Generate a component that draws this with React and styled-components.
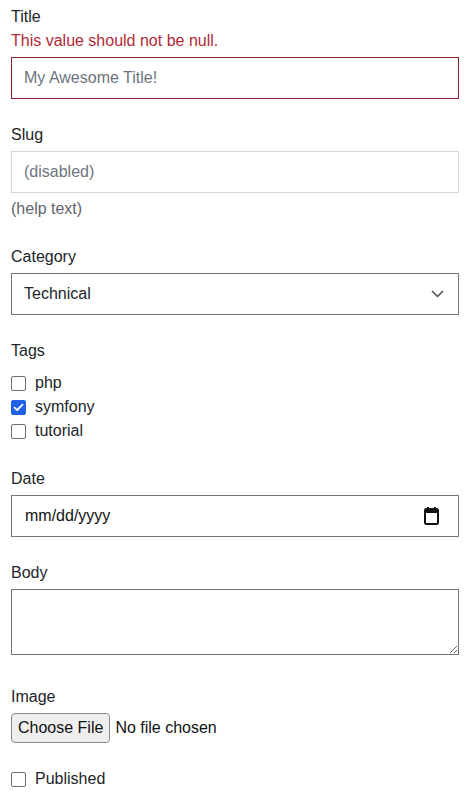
import React from "react";
import styled, { createGlobalStyle } from "styled-components";

const Global = createGlobalStyle`
  html, body { margin: 0; padding: 0; background: #fff; }
  body {
    font-family: "Liberation Sans", Arial, sans-serif;
    font-size: 16px;
    line-height: 24px;
    color: #212529;
  }
  * { box-sizing: border-box; }
`;

const Form = styled.form`
  width: 472px;
  padding: 5px 13px 0 11px;
  display: flex;
  flex-direction: column;
`;

const Group = styled.div`
  margin-bottom: ${(p) => p.$mb ?? 24}px;
  display: flex;
  flex-direction: column;
  align-items: stretch;
`;

const Label = styled.label`
  display: block;
  font-size: 16px;
  line-height: 24px;
  color: #212529;
  margin-bottom: 4px;
`;

const Error = styled.span`
  display: block;
  color: #b02a37;
`;

const TextInput = styled.input`
  display: block;
  width: 100%;
  height: 42px;
  padding: 0 12px;
  font: inherit;
  color: #212529;
  background: #fff;
  border: 1px solid ${(p) => (p.$invalid ? "#8f2231" : p.disabled ? "#d6d6d6" : "#767676")};
  border-radius: 0;
  outline: none;
  &::placeholder { color: #6c737d; opacity: 1; }
`;

const Help = styled.div`
  margin-top: 4px;
  color: #5f656c;
`;

const SelectWrap = styled.div`
  position: relative;
`;

const Select = styled.select`
  appearance: none;
  -webkit-appearance: none;
  display: block;
  width: 100%;
  height: 42px;
  padding: 0 40px 0 12px;
  font: inherit;
  color: #212529;
  background: #fff;
  border: 1px solid #767676;
  border-radius: 0;
  outline: none;
`;

const Chevron = styled.svg`
  position: absolute;
  right: 15px;
  top: 17px;
  pointer-events: none;
`;

const CheckList = styled.div`
  padding-top: ${(p) => p.$pt ?? 4}px;
  display: flex;
  flex-direction: column;
`;

const CheckRow = styled.label`
  display: flex;
  align-items: center;
  height: 24px;
  gap: 9px;
  color: #212529;
`;

const Box = styled.span`
  width: 15px;
  height: 15px;
  flex: none;
  border-radius: 2px;
  border: 1px solid ${(p) => (p.$checked ? "#1f62e8" : "#6f6f6f")};
  background: ${(p) => (p.$checked ? "#1f62e8" : "#fff")};
  display: flex;
  align-items: center;
  justify-content: center;
`;

const DateField = styled.div`
  height: 42px;
  border: 1px solid #767676;
  display: flex;
  align-items: center;
  justify-content: space-between;
  padding: 0 19px 0 13px;
  color: #111;
`;

const TextArea = styled.textarea`
  display: block;
  width: 100%;
  height: 66px;
  padding: 8px 12px;
  font: inherit;
  border: 1px solid #767676;
  border-radius: 0;
  margin-bottom: 6px;
  resize: vertical;
  outline: none;
`;

const FileRow = styled.div`
  display: flex;
  align-items: center;
  gap: 5px;
  height: 30px;
`;

const FileButton = styled.span`
  height: 30px;
  display: flex;
  align-items: center;
  padding: 0 6px;
  background: #efefef;
  border: 1px solid #8a8a8a;
  border-radius: 4px;
  color: #111;
`;

const FileText = styled.span`
  color: #111;
`;

function Check({ label, checked }) {
  return (
    <CheckRow>
      <Box $checked={checked}>
        {checked && (
          <svg width="11" height="9" viewBox="0 0 11 9">
            <path d="M1.5 4.6 L4.2 7.2 L9.5 1.6" fill="none" stroke="#fff" strokeWidth="1.8" strokeLinecap="round" strokeLinejoin="round" />
          </svg>
        )}
      </Box>
      {label}
    </CheckRow>
  );
}

export default function App() {
  return (
    <>
      <Global />
      <Form onSubmit={(e) => e.preventDefault()}>
        <Group>
          <Label>
            Title
            <Error>This value should not be null.</Error>
          </Label>
          <TextInput $invalid placeholder="My Awesome Title!" />
        </Group>

        <Group>
          <Label>Slug</Label>
          <TextInput disabled placeholder="(disabled)" />
          <Help>(help text)</Help>
        </Group>

        <Group>
          <Label>Category</Label>
          <SelectWrap>
            <Select defaultValue="technical">
              <option value="technical">Technical</option>
            </Select>
            <Chevron width="13" height="8" viewBox="0 0 13 8">
              <path d="M1 1 L6.5 6.5 L12 1" fill="none" stroke="#4a4a4a" strokeWidth="1.5" />
            </Chevron>
          </SelectWrap>
        </Group>

        <Group>
          <Label>Tags</Label>
          <CheckList>
            <Check label="php" />
            <Check label="symfony" checked />
            <Check label="tutorial" />
          </CheckList>
        </Group>

        <Group>
          <Label>Date</Label>
          <DateField>
            <span>mm/dd/yyyy</span>
            <svg width="15" height="18" viewBox="0 0 15 18">
              <rect x="3" y="0" width="2" height="3" fill="#111" />
              <rect x="10" y="0" width="2" height="3" fill="#111" />
              <rect x="1" y="2" width="13" height="15" rx="1.5" fill="none" stroke="#111" strokeWidth="2" />
              <rect x="1" y="2" width="13" height="4" fill="#111" />
            </svg>
          </DateField>
        </Group>

        <Group>
          <Label>Body</Label>
          <TextArea rows={2} />
        </Group>

        <Group>
          <Label>Image</Label>
          <FileRow>
            <FileButton>Choose File</FileButton>
            <FileText>No file chosen</FileText>
          </FileRow>
        </Group>

        <Group $mb={0}>
          <CheckList $pt={0}>
            <Check label="Published" />
          </CheckList>
        </Group>
      </Form>
    </>
  );
}
